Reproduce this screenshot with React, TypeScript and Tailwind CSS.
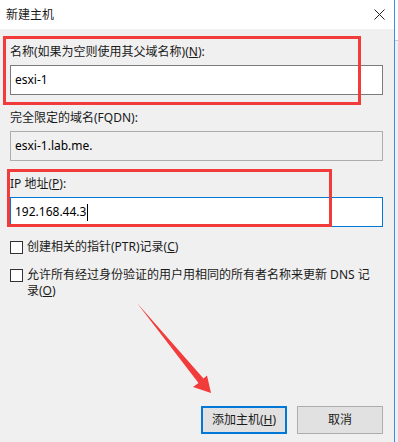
const font = { fontFamily: '"Noto Sans", "Noto Sans CJK SC", sans-serif' };

function Field({ label, children, className }: { label: React.ReactNode; children: React.ReactNode; className?: string }) {
  return (
    <div className={className}>
      <div className="text-[12px] leading-[16px] text-[#1a1a1a]">{label}</div>
      {children}
    </div>
  );
}

function CheckRow({ children, className }: { children: React.ReactNode; className?: string }) {
  return (
    <div className={`flex items-start gap-[4px] ${className ?? ''}`}>
      <div className="mt-[2px] h-[13px] w-[13px] shrink-0 border border-[#333333] bg-white" />
      <div className="text-[12px] leading-[16px] text-[#1a1a1a]">{children}</div>
    </div>
  );
}

export default function App() {
  return (
    <div className="relative flex h-[442px] w-[398px] overflow-hidden bg-[#f0f0f0]" style={font}>
      <div className="flex w-[394px] flex-col bg-[#f0f0f0]">
        <div className="flex h-[29px] items-center justify-between bg-white pl-[6px] pr-[9px]">
          <span className="text-[12px] text-[#1a1a1a]">新建主机</span>
          <svg width="11" height="11" viewBox="0 0 11 11">
            <path d="M0.5 0.5 L10.5 10.5 M10.5 0.5 L0.5 10.5" stroke="#222" strokeWidth="1" />
          </svg>
        </div>

        <div className="flex flex-1 flex-col pl-[10px] pr-[11px]">
          <Field
            className="mt-[15px]"
            label={
              <>
                名称(如果为空则使用其父域名称)(<span className="underline">N</span>):
              </>
            }
          >
            <div className="mt-[5px] flex h-[30px] items-center border border-[#7a7a7a] bg-white px-[4px] text-[12px] text-black">
              esxi-1
            </div>
          </Field>

          <Field className="mt-[15px]" label="完全限定的域名(FQDN):">
            <div className="mt-[5px] flex h-[30px] items-center border border-[#adadad] bg-[#f0f0f0] px-[4px] text-[12px] text-black">
              esxi-1.lab.me.
            </div>
          </Field>

          <Field
            className="mt-[15px]"
            label={
              <>
                IP 地址(<span className="underline">P</span>):
              </>
            }
          >
            <div className="mt-[5px] flex h-[30px] items-center border border-[#0078d7] bg-white px-[4px] text-[12px] text-black">
              192.168.44.3
              <span className="ml-[1px] inline-block h-[17px] w-[1px] bg-black" />
            </div>
          </Field>

          <CheckRow className="mt-[12px]">
            创建相关的指针(PTR)记录(<span className="underline">C</span>)
          </CheckRow>
          <CheckRow className="mt-[12px]">
            允许所有经过身份验证的用户用相同的所有者名称来更新 DNS 记
            <br />
            录(<span className="underline">O</span>)
          </CheckRow>

          <div className="mt-auto mb-[8px] flex justify-end gap-[10px]">
            <button className="flex h-[28px] w-[86px] items-center justify-center border-2 border-[#0078d7] bg-[#e1e1e1] text-[12px] text-[#1a1a1a]">
              添加主机(<span className="underline">H</span>)
            </button>
            <button className="flex h-[28px] w-[86px] items-center justify-center border border-[#adadad] bg-[#e1e1e1] text-[12px] text-[#1a1a1a]">
              取消
            </button>
          </div>
        </div>
      </div>

      <div className="w-[1px] bg-[#3a8ee6]" />
      <div className="flex w-[3px] flex-col">
        <div className="h-[40px] bg-white" />
        <div className="h-[1px] bg-[#c8c8c8]" />
        <div className="flex-1 bg-[#f0f0f0]" />
      </div>

      {/* annotations */}
      <div className="pointer-events-none absolute left-[3px] top-[36px] h-[69px] w-[358px] border-[3px] border-[#f23b3b]" />
      <div className="pointer-events-none absolute left-[7px] top-[169px] h-[58px] w-[325px] border-[3px] border-[#f23b3b]" />
      <svg className="pointer-events-none absolute left-0 top-0" width="398" height="442" viewBox="0 0 398 442">
        <polygon
          points="137,303 203.5,378.5 207,375.5 211,393 193,387 198.5,383"
          fill="#f23b3b"
        />
      </svg>
    </div>
  );
}
